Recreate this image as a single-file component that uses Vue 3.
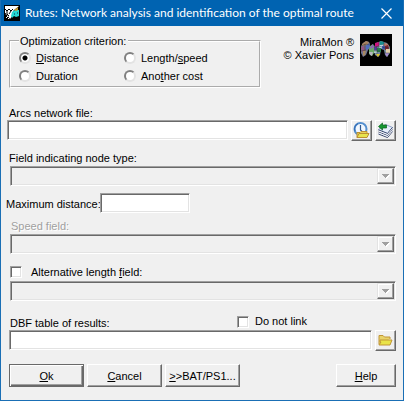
<script setup>
import { ref } from 'vue'

const criterion = ref('distance')
const arcs = ref('')
const maxDistance = ref('')
const results = ref('')
const altLength = ref(false)
const noLink = ref(false)

const criteria = [
  { id: 'distance', pre: '', key: 'D', post: 'istance' },
  { id: 'speed', pre: 'Length/', key: 's', post: 'peed' },
  { id: 'duration', pre: 'Du', key: 'r', post: 'ation' },
  { id: 'cost', pre: 'Ano', key: 't', post: 'her cost' }
]
</script>

<template>
  <main class="window">
    <header class="titlebar">
      <svg class="app-icon" width="16" height="16" viewBox="0 0 16 16" aria-hidden="true">
        <rect width="16" height="16" fill="#000" />
        <path d="M1 1H15L9 6V10L6 14L4 11L1 9Z" fill="#fff" />
        <path d="M1 4l2 2 2-2 2 2 2-2M3 6v3l2 2M7 6L5 9M1 8l2 3" fill="none" stroke="#000" />
        <path d="M2 13l2-2M4 14l3-3" fill="none" stroke="#fff" />
        <path d="M8 7l3-2 4 0v6l-3 1-2-1-2 2-1-2z" fill="#24d8d2" />
        <path d="M10 5l4-3v3l-2 1z" fill="#c39a33" />
        <path d="M10 8h1v2h-1zM13 7h1v2h-1z" fill="#177e91" />
      </svg>
      <h1>Rutes: Network analysis and identification of the optimal route</h1>
      <button class="close" type="button" aria-label="Close">
        <svg width="11" height="11" viewBox="0 0 11 11"><path d="M.5 .5l10 10M10.500 .5l-10 10" stroke="#fff" stroke-width="1.200" /></svg>
      </button>
    </header>

    <form class="content" @submit.prevent>
      <section class="top">
        <fieldset>
          <legend>Optimization criterion:</legend>
          <div class="radios">
            <label v-for="c in criteria" :key="c.id">
              <input v-model="criterion" type="radio" name="criterion" :value="c.id" />
              <span>{{ c.pre }}<u>{{ c.key }}</u>{{ c.post }}</span>
            </label>
          </div>
        </fieldset>
        <div class="credits">
          <p>MiraMon ®</p>
          <p>© Xavier Pons</p>
        </div>
        <svg class="logo" width="32" height="32" viewBox="0 0 32 32" aria-hidden="true">
          <rect width="32" height="32" fill="#000" />
          <path d="M1 15V12L3 9L6 7L9 8L10 10V14L8 16L6 21L3 23L1 19Z" fill="#6d7391" />
          <path d="M2 10l4-3 3 1-2 3-5 1z" fill="#a8845f" />
          <path d="M6 11l4-1v4l-4 2z" fill="#4d6dbe" />
          <path d="M1 13l3-1 1 4-3 2z" fill="#93557c" />
          <path d="M3 17l3-1-1 5-2 1z" fill="#a8895f" />
          <path d="M9 20V15l1-3 3-2 1 2v7l-2 3z" fill="#6aa867" />
          <path d="M10 13l3-3 1 3-3 2z" fill="#8a6cb0" />
          <path d="M9 18h4l-1 4-2-1z" fill="#b5b5bd" />
          <path d="M14 13l2-4 5-2 6 2 3 4v6l-3 4-2-2-1-5-3-1-1 6-2 2-3-2-1-4z" fill="#7489a0" />
          <path d="M15 9l4-1v4l-4 1z" fill="#d0127e" />
          <path d="M20 7l4 1v2l-4 1z" fill="#16908f" />
          <path d="M24 9l4 1 1 3-5 1z" fill="#b87969" />
          <path d="M19 11h4v3h-4z" fill="#bad0df" />
          <path d="M14 13h3v3h-3z" fill="#553c96" />
          <path d="M22 12h3v3h-3z" fill="#415fc0" />
          <path d="M17 14h4v4h-4z" fill="#28804d" />
          <path d="M14 17h3v2h-3z" fill="#b1d0cc" />
          <path d="M16 20h4l-2 3z" fill="#ddc327" />
          <path d="M25 12l3-1 1 4-4 1z" fill="#7b2430" />
          <path d="M26 15h4v4h-4z" fill="#dfcfaa" />
          <path d="M25 19h4l-2 4z" fill="#a68bd0" />
          <path d="M1 12l5-2 4 1M5 10v7M1 17l5-1M14 13l5-1 6 2 5-1M17 12v8M24 8v8M19 8v6M14 17h6M25 19h5" fill="none" stroke="#26262e" stroke-width=".4" />
        </svg>
      </section>

      <label class="caption arcs-label" for="arcs">Arcs network file:</label>
      <div class="row arcs-row">
        <input id="arcs" v-model="arcs" class="sunken grow" type="text" />
        <button class="raised tool" type="button" aria-label="Recent files">
          <svg width="17" height="17" viewBox="0 0 17 17" aria-hidden="true">
            <circle cx="7.500" cy="7" r="6" fill="#f2f8ff" stroke="#5690cf" stroke-width="2" />
            <path d="M2 9A6 6 0 0 1 5 1.500" fill="none" stroke="#2f66b0" />
            <path d="M7.500 3v5l2 2" fill="none" stroke="#315b91" stroke-width="1.200" />
            <path d="M4 15.500V10.500h3l1-1h6v2" fill="#e9d257" stroke="#bd9132" />
            <path d="M4 15.500l2-4h10l-2 4z" fill="#e7e34d" stroke="#bd9132" />
          </svg>
        </button>
        <button class="raised tool" type="button" aria-label="Load from map">
          <svg width="17" height="17" viewBox="0 0 17 17" aria-hidden="true">
            <path d="M1 12l6-5 9 2-5 6z" fill="#dce5f4" />
            <path d="M1.500 7.500l7-5 7 3-5 6z" fill="#e6eefb" stroke="#8ea2c8" />
            <path d="M1.500 8l9 3.500 5-6M1.500 10l9 3.500 5-6M1.500 12l9 3.500 5-6" fill="none" stroke="#344269" />
            <path d="M2 9l8.500 3.500 5-6M2 11l8.500 3.500 5-6" fill="none" stroke="#fff" stroke-width=".8" />
            <path d="M1.500 4.500l4-3.500v2h4v3h-4v2z" fill="#159631" stroke="#08621b" stroke-width=".7" />
          </svg>
        </button>
      </div>

      <label class="caption node-label" for="node">Field indicating node type:</label>
      <div class="combo">
        <select id="node" disabled></select>
        <span class="arrow"><svg width="8" height="5" viewBox="0 0 8 5" shape-rendering="crispEdges"><path d="M1 1h7v1H7v1H6v1H5v1H4z" fill="#fff" /><path d="M0 0h7v1H6v1H5v1H4v1H3V3H2V2H1V1H0z" fill="#a0a0a0" /></svg></span>
      </div>

      <div class="distance">
        <label for="max">Maximum distance:</label>
        <input id="max" v-model="maxDistance" class="sunken" type="text" />
      </div>

      <label class="caption speed-label" for="speed">Speed field:</label>
      <div class="combo">
        <select id="speed" disabled></select>
        <span class="arrow"><svg width="8" height="5" viewBox="0 0 8 5" shape-rendering="crispEdges"><path d="M1 1h7v1H7v1H6v1H5v1H4z" fill="#fff" /><path d="M0 0h7v1H6v1H5v1H4v1H3V3H2V2H1V1H0z" fill="#a0a0a0" /></svg></span>
      </div>

      <label class="check alternative">
        <input v-model="altLength" type="checkbox" />
        <span>Alternative length <u>f</u>ield:</span>
      </label>
      <div class="combo">
        <select aria-label="Alternative length field" disabled></select>
        <span class="arrow"><svg width="8" height="5" viewBox="0 0 8 5" shape-rendering="crispEdges"><path d="M1 1h7v1H7v1H6v1H5v1H4z" fill="#fff" /><path d="M0 0h7v1H6v1H5v1H4v1H3V3H2V2H1V1H0z" fill="#a0a0a0" /></svg></span>
      </div>

      <div class="result-head">
        <label class="result-label" for="results">DBF table of results:</label>
        <label class="check link">
          <input v-model="noLink" type="checkbox" />
          <span>Do not link</span>
        </label>
      </div>
      <div class="row result-row">
        <input id="results" v-model="results" class="sunken grow" type="text" />
        <button class="raised tool" type="button" aria-label="Browse">
          <svg width="17" height="17" viewBox="0 0 17 17" aria-hidden="true">
            <path d="M2 12.500V3.500h4l1.500 1.500H13v2" fill="#e8d36a" stroke="#c19636" />
            <path d="M2 13l2-3h-1v-2h12l-2 5z" fill="#e9e449" stroke="#c19636" />
          </svg>
        </button>
      </div>

      <footer>
        <button class="raised push default" type="submit"><u>O</u>k</button>
        <button class="raised push" type="button"><u>C</u>ancel</button>
        <button class="raised push" type="button"><u>&gt;</u>&gt;BAT/PS1...</button>
        <button class="raised push help" type="button"><u>H</u>elp</button>
      </footer>
    </form>
  </main>
</template>

<style>
body { background: #f0f0f0; }
</style>

<style scoped>
* { box-sizing: border-box; }
.window {
  border: 1px solid #1a6fb5;
  border-top: 0;
  background: #f0f0f0;
  color: #000;
  font: 11px/14px "Liberation Sans", Arial, sans-serif;
}
input, button, select { margin: 0; font: inherit; color: inherit; }
p { margin: 0; }
u { text-underline-offset: 1px; text-decoration-skip-ink: none; }

.titlebar {
  display: flex;
  align-items: center;
  height: 26px;
  padding: 0 11px 0 3px;
  background: #0063b1;
  color: #fff;
}
.titlebar h1 {
  flex: 1;
  margin: 0 0 0 5px;
  font: 400 12px/16px Lato, "Open Sans", sans-serif;
  white-space: nowrap;
}
.close { display: flex; padding: 0; border: 0; background: none; }

.content { padding: 8px 7px 13px 5px; }
.top { display: flex; align-items: flex-start; padding-right: 4px; }
fieldset {
  width: 252px;
  min-width: 0;
  margin: 0 0 0 3px;
  padding: 1px 8px;
  border: 2px groove #fff;
}
legend { padding: 0 2px 0 1px; }
.radios { display: grid; grid-template-columns: 105px 1fr; grid-auto-rows: 18px; }
.radios label { display: flex; align-items: center; gap: 5px; }
.radios input {
  appearance: none;
  width: 12px;
  height: 12px;
  border: 2px solid;
  border-color: #808080 #e3e3e3 #e3e3e3 #808080;
  border-radius: 50%;
  background: #fff;
}
.radios input:checked { background: radial-gradient(circle, #000 2px, #fff 3px); }
.credits { flex: 1; padding: 2px 6px 0 0; text-align: right; line-height: 13px; }

.caption { display: block; margin-left: 3px; }
.arcs-label { margin-top: 18px; }
.node-label { margin: 10px 0 1px 3px; }
.speed-label { margin: 6px 0 1px 5px; color: #a0a0a0; text-shadow: 1px 1px #fff; }

.row { display: flex; align-items: flex-start; gap: 3px; }
.arcs-row { padding-left: 1px; }
.grow { flex: 1; min-width: 0; }
.sunken, .check input, .combo {
  border: 1px solid;
  border-color: #a0a0a0 #fff #fff #a0a0a0;
  box-shadow: inset 1px 1px #696969, inset -1px -1px #e3e3e3;
}
.sunken { height: 20px; padding: 2px 4px; border-radius: 0; background: #fff; outline: 0; }
.raised {
  border: 1px solid;
  border-color: #fff #696969 #696969 #fff;
  box-shadow: inset -1px -1px #a0a0a0, inset 1px 1px #f0f0f0;
  background: #f0f0f0;
}
.tool { display: flex; width: 21px; height: 21px; padding: 1px; }

.combo { display: flex; height: 20px; margin-left: 4px; padding: 1px; }
.combo select { flex: 1; appearance: none; min-width: 0; padding: 0; border: 0; background: none; }
.arrow {
  display: flex;
  align-items: center;
  justify-content: center;
  width: 17px;
  border: 1px solid;
  border-color: #e3e3e3 #696969 #696969 #e3e3e3;
  box-shadow: inset -1px -1px #a0a0a0, inset 1px 1px #fff;
}

.distance { display: flex; align-items: center; margin-top: 7px; }
.distance label { width: 94px; padding-top: 1px; white-space: nowrap; }
.distance .sunken { width: 90px; }

.check { display: flex; align-items: center; gap: 9px; }
.check input { appearance: none; width: 12px; height: 12px; background: #fff; }
.check input:checked { background: #000; }
.alternative { margin: 11px 0 2px 4px; }
.result-head { display: flex; align-items: flex-start; margin-top: 14px; }
.result-label { width: 231px; padding: 2px 0 0 4px; line-height: 13px; }
.link { line-height: 13px; gap: 6px; }
.result-row { padding-left: 3px; }

footer { display: flex; gap: 3px; margin: 13px 0 0 3px; }
.push { width: 75px; height: 23px; padding: 0; }
.default {
  border-color: #696969;
  box-shadow: inset 1px 1px #fff, inset -1px -1px #696969, inset -2px -2px #a0a0a0;
}
.help { width: 60px; margin-left: auto; }
</style>
